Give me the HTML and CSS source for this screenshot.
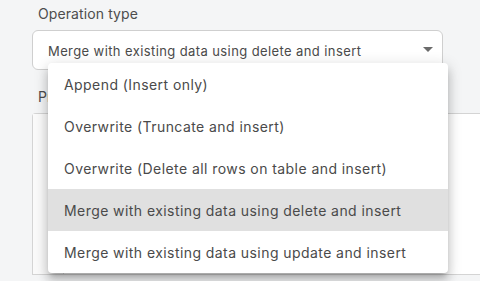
FILE: index.html
```html
<!DOCTYPE html>
<html>
<head>
<meta charset="utf-8">
<link rel="stylesheet" href="styles.css">
</head>
<body>
<div class="form">
  <div class="field">
    <div class="label">Operation type</div>
    <div class="select">
      <span class="value">Merge with existing data using delete and insert</span>
      <svg class="caret" width="10" height="5" viewBox="0 0 10 5"><path d="M0 0h10L5 5z" fill="#6b6b6b"/></svg>
    </div>
  </div>
  <div class="field">
    <div class="label">Pre SQL</div>
    <div class="editor">
      <div class="gutter"></div>
      <div class="code"></div>
    </div>
  </div>
</div>
<ul class="menu">
  <li class="item">Append (Insert only)</li>
  <li class="item">Overwrite (Truncate and insert)</li>
  <li class="item">Overwrite (Delete all rows on table and insert)</li>
  <li class="item selected">Merge with existing data using delete and insert</li>
  <li class="item">Merge with existing data using update and insert</li>
</ul>
</body>
</html>
```
FILE: styles.css
```css
html, body {
  margin: 0;
  padding: 0;
  height: 100%;
  overflow: hidden;
}
body {
  background: #f4f5f6;
  font-family: Inter, "Noto Sans", sans-serif;
  color: #333;
}
.form {
  padding: 5px 0 0 32px;
  display: flex;
  flex-direction: column;
  gap: 18px;
}
.field {
  display: flex;
  flex-direction: column;
}
.label {
  font-size: 14px;
  line-height: 18px;
  color: #4d4d4d;
  padding-left: 6px;
  margin-bottom: 7px;
  letter-spacing: 0.1px;
}
.select {
  width: 411px;
  height: 40px;
  box-sizing: border-box;
  border: 1px solid #cfcfcf;
  border-radius: 6px;
  background: #fff;
  display: flex;
  align-items: center;
  justify-content: space-between;
  padding: 0 9px 0 15px;
  font-size: 13px;
  color: #4a4a4a;
  letter-spacing: 0.4px;
}
.value { padding-top: 2px; }
.caret { margin-top: -1px; }
.editor {
  display: flex;
  height: 160px;
  border: 1px solid #d4d4d4;
  border-right: none;
  border-radius: 4px 0 0 0;
  background: #fff;
}
.gutter {
  width: 30px;
  border-right: 1px solid #dcdcdc;
  background: #fafafa;
}
.code { flex: 1; }
.menu {
  position: absolute;
  left: 48px;
  top: 63px;
  width: 400px;
  margin: 0;
  padding: 0;
  list-style: none;
  background: #fff;
  border-radius: 4px;
  box-shadow: 0 5px 5px -3px rgba(0,0,0,0.2), 0 8px 10px 1px rgba(0,0,0,0.14), 0 3px 14px 2px rgba(0,0,0,0.12);
  overflow: hidden;
}
.item {
  height: 42px;
  display: flex;
  align-items: center;
  padding-left: 16px;
  font-size: 14px;
  color: #4a4a4a;
  letter-spacing: 0.43px;
}
.selected { background: #e0e0e0; }
```
